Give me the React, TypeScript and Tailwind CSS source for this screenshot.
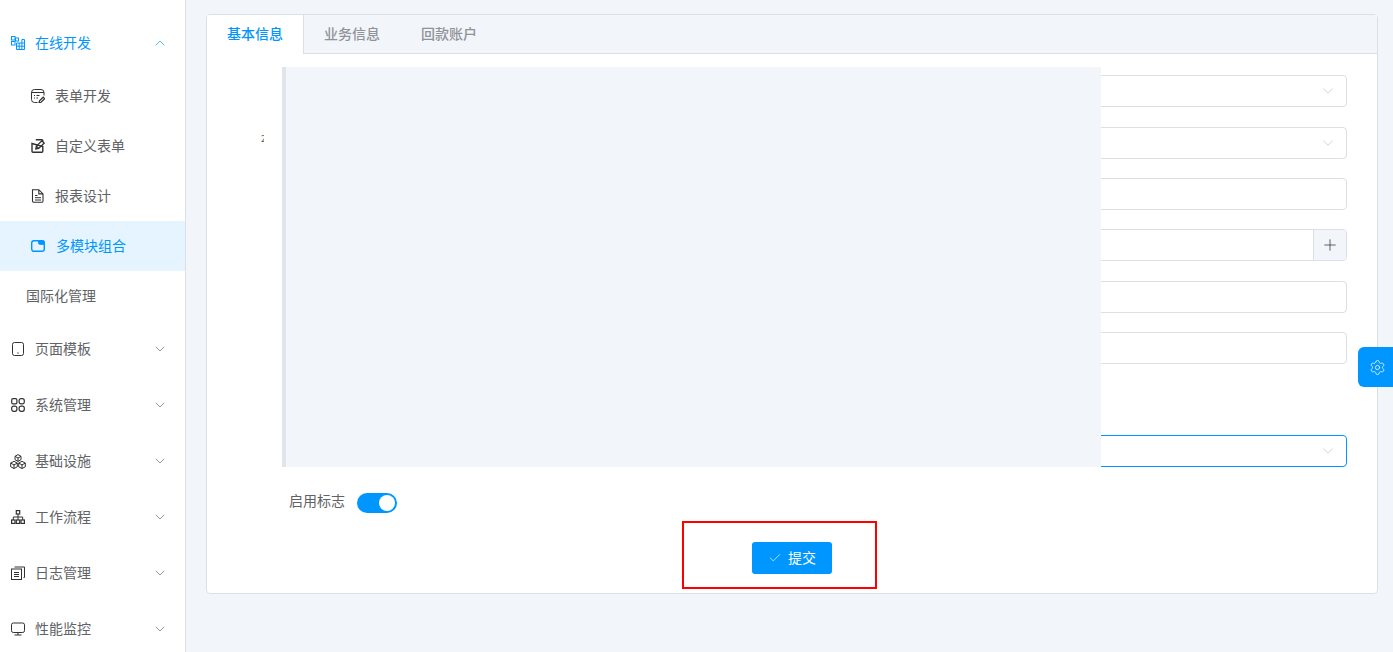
import { ChevronDown, ChevronUp, Check, Plus, Settings } from "lucide-react";
import type { ReactNode } from "react";

const Svg = ({ children, className = "" }: { children: ReactNode; className?: string }) => (
  <svg viewBox="0 0 14 14" fill="none" stroke="currentColor" strokeWidth="1" className={`h-[14px] w-[14px] shrink-0 ${className}`}>
    {children}
  </svg>
);

const icons = {
  blocks: (
    <Svg>
      <rect x="0.500" y="0.500" width="3.500" height="3.500" />
      <rect x="4.500" y="2" width="3" height="3" />
      <rect x="0.500" y="5.500" width="3.500" height="3.500" />
      <path d="M5.500 7h8v6.500h-8zM5.500 10.200h8M8.200 7v6.500M10.900 3.500V13.500M10.900 3.500h2.600V7" />
    </Svg>
  ),
  form: (
    <Svg>
      <path d="M6.500 13.500H3.500a3 3 0 0 1-3-3v-7a3 3 0 0 1 3-3h6.500a3 3 0 0 1 3 3v3M.5 3.500h12.500" />
      <path d="M3 6.500h1M5.500 6.500h3M3 9h1M5.500 9h1.500" />
      <path d="M8 13.800l.5-2 3.700-3.600 1.500 1.500-3.700 3.600z" strokeWidth="1.200" />
    </Svg>
  ),
  edit: (
    <Svg>
      <path d="M4.800 .8h6a1 1 0 0 1 1 1v1M11.800 7.500v4.700a1 1 0 0 1-1 1H2a1 1 0 0 1-1-1V4.500z" strokeWidth="1.400" />
      <path d="M4.800 10l.6-2.900L10.800 1.800l2.300 2.300-5.400 5.300zM5.400 7.100l2.300 2.300" strokeWidth="1.300" />
    </Svg>
  ),
  doc: (
    <Svg>
      <path d="M1.500.7h6.300l4.200 4.200v7a1.400 1.400 0 0 1-1.400 1.400H2.900a1.400 1.400 0 0 1-1.400-1.400zM7.800.7v4.200H12" strokeWidth="1.100" />
      <path d="M4 6.500h2.500M4 8.700h6M4 11h6" />
    </Svg>
  ),
  module: (
    <Svg>
      <rect x="0.700" y="1.700" width="12.600" height="10.600" rx="2.200" strokeWidth="1.400" />
      <path d="M7.500 1.700h4a1.800 1.800 0 0 1 1.800 1.800v1.800H9a1.500 1.500 0 0 1-1.500-1.500z" fill="currentColor" />
    </Svg>
  ),
  tablet: (
    <Svg>
      <rect x="1.500" y="0.500" width="11" height="13" rx="2" />
      <path d="M6.300 11h1.400" strokeWidth="1.200" />
    </Svg>
  ),
  grid: (
    <Svg>
      <rect x="0.700" y="0.700" width="5.200" height="5.200" rx="1.300" strokeWidth="1.200" />
      <rect x="8.100" y="0.700" width="5.200" height="5.200" rx="2" strokeWidth="1.200" />
      <rect x="0.700" y="8.100" width="5.200" height="5.200" rx="2" strokeWidth="1.200" />
      <rect x="8.100" y="8.100" width="5.200" height="5.200" rx="2" strokeWidth="1.200" />
    </Svg>
  ),
  cubes: (
    <svg viewBox="0 0 16 15" fill="none" stroke="currentColor" strokeWidth="1" className="-mx-px h-[15px] w-4 shrink-0">
      <path d="M8 .6l3 1.700v3.400L8 7.400 5 5.700V2.300zM5 2.300L8 4l3-1.700M8 4v3.400" />
      <path d="M4 7.300l3.300 1.800v3.700L4 14.500.7 12.800V9.100zM.7 9.100L4 10.900l3.300-1.800M4 10.900v3.600" />
      <path d="M12 7.300l3.300 1.800v3.700L12 14.500l-3.300-1.700V9.100zM8.700 9.100l3.300 1.800 3.300-1.800M12 10.900v3.600" />
    </svg>
  ),
  tree: (
    <Svg>
      <rect x="5.300" y="0.600" width="3.400" height="3.400" strokeWidth="1.200" />
      <rect x="0.600" y="10" width="3.400" height="3.400" strokeWidth="1.200" />
      <rect x="5.300" y="10" width="3.400" height="3.400" strokeWidth="1.200" />
      <rect x="10" y="10" width="3.400" height="3.400" strokeWidth="1.200" />
      <path d="M7 4v6M2.300 10V7h9.400v3" />
    </Svg>
  ),
  copy: (
    <Svg>
      <rect x="0.500" y="3" width="10" height="10.500" />
      <path d="M3.500 1h10v10.500h-1M3 6.500h5M3 8.500h5M3 10.500h5" />
    </Svg>
  ),
  monitor: (
    <Svg>
      <rect x="0.500" y="1" width="13" height="9.500" rx="1.800" />
      <path d="M7 10.500v2.500M3.500 13h7" />
    </Svg>
  ),
};

const Chevron = ({ open = false }: { open?: boolean }) => {
  const Icon = open ? ChevronUp : ChevronDown;
  return <Icon size={16} strokeWidth={1} className="absolute left-[152px] top-1/2 -translate-y-1/2" />;
};

const subItems = [
  { label: "表单开发", icon: icons.form },
  { label: "自定义表单", icon: icons.edit },
  { label: "报表设计", icon: icons.doc },
];

const groups = [
  { label: "页面模板", icon: icons.tablet },
  { label: "系统管理", icon: icons.grid },
  { label: "基础设施", icon: icons.cubes },
  { label: "工作流程", icon: icons.tree },
  { label: "日志管理", icon: icons.copy },
  { label: "性能监控", icon: icons.monitor },
];

const inputBox = "flex h-8 items-center justify-end rounded border bg-white";

function SelectBox({ focused = false }: { focused?: boolean }) {
  return (
    <div className={`${inputBox} pr-[9px] ${focused ? "border-[#0096ff]" : "border-[#dcdfe6]"}`}>
      <ChevronDown size={18} strokeWidth={1} className="text-[#c0c4cc]" />
    </div>
  );
}

export default function App() {
  return (
    <div className="flex h-screen overflow-hidden bg-[#f2f5f9] font-['Noto_Sans_CJK_SC','Noto_Sans',sans-serif] text-sm text-[#606266]">
      <aside className="w-[186px] shrink-0 overflow-hidden border-r border-[#dcdfe6] bg-white pt-[15px]">
        <div className="relative flex h-14 items-center pl-[11px] text-[#0096ff]">
          {icons.blocks}
          <span className="ml-[10px] pb-[2px]">在线开发</span>
          <Chevron open />
        </div>
        {subItems.map((item) => (
          <div key={item.label} className="flex h-[50px] items-center pl-[31px]">
            <span className="text-[#303133]">{item.icon}</span>
            <span className="ml-[10px] pb-[2px]">{item.label}</span>
          </div>
        ))}
        <div className="flex h-[50px] items-center bg-[#e5f4ff] pl-[31px] text-[#0096ff]">
          {icons.module}
          <span className="ml-[11px] pb-[2px]">多模块组合</span>
        </div>
        <div className="flex h-[50px] items-center pb-[2px] pl-[26px]">国际化管理</div>
        {groups.map((item) => (
          <div key={item.label} className="relative flex h-14 items-center pl-[11px]">
            <span className="text-[#303133]">{item.icon}</span>
            <span className="ml-[10px] pb-[2px]">{item.label}</span>
            <Chevron />
          </div>
        ))}
      </aside>

      <main className="min-w-0 flex-1 pl-5 pr-[15px] pt-[14px]">
        <div className="relative h-[580px] rounded-sm border border-[#dcdfe6] bg-white">
          <div className="flex h-[39px] border-b border-[#dcdfe6] bg-[#f2f5f9] font-medium text-[#909399]">
            <div className="-mb-px h-[39px] w-[97px] rounded-tl-sm border-r border-[#dcdfe6] bg-white pl-5 leading-[36px] text-[#0096ff]">基本信息</div>
            <div className="w-[97px] pl-5 leading-[36px]">业务信息</div>
            <div className="w-[97px] pl-5 leading-[36px]">回款账户</div>
          </div>

          <div className="ml-auto flex w-[520px] flex-col gap-y-[19.4px] pr-[30px] pt-[21.2px]">
            <SelectBox />
            <SelectBox />
            <div className={`${inputBox} border-[#dcdfe6]`} />
            <div className={`${inputBox} overflow-hidden border-[#dcdfe6]`}>
              <div className="flex h-full w-[33px] items-center justify-center border-l border-[#dcdfe6] bg-[#f2f5f9] text-[#303133]">
                <Plus size={18} strokeWidth={1} />
              </div>
            </div>
            <div className={`${inputBox} border-[#dcdfe6]`} />
            <div className={`${inputBox} border-[#dcdfe6]`} />
            <div className="h-8" />
            <SelectBox focused />
          </div>

          <div className="mt-[26px] flex h-5 items-center pl-[82px]">
            <span className="pb-[6px] leading-5">启用标志</span>
            <span className="ml-3 flex h-5 w-10 items-center justify-end rounded-full bg-[#0096ff] pr-[2px]">
              <span className="h-4 w-4 rounded-full bg-white" />
            </span>
          </div>

          <div className="mt-[29px] flex justify-center">
            <button className="flex h-8 w-20 items-center justify-center gap-[6px] rounded-[3px] bg-[#0096ff] text-white">
              <Check size={14} strokeWidth={1.2} />
              <span className="pb-[2px]">提交</span>
            </button>
          </div>

          <div className="absolute left-[54px] top-[118px] h-[12px] w-[3px] overflow-hidden text-[9px] leading-3 text-[#606266]">2</div>
          <div className="absolute left-[75px] top-[52px] h-[400px] w-[819px] border-l-4 border-[#e0e5ec] bg-[#f2f5f9]" />
          <div className="absolute left-[475px] top-[506px] h-[68px] w-[195px] border-2 border-[#ff0000]" />
        </div>
      </main>

      <div className="fixed right-0 top-[347px] flex h-10 w-[35px] items-center justify-center rounded-l-md bg-[#0096ff] pl-[3px] text-white">
        <Settings size={17} strokeWidth={1.1} />
      </div>
    </div>
  );
}
